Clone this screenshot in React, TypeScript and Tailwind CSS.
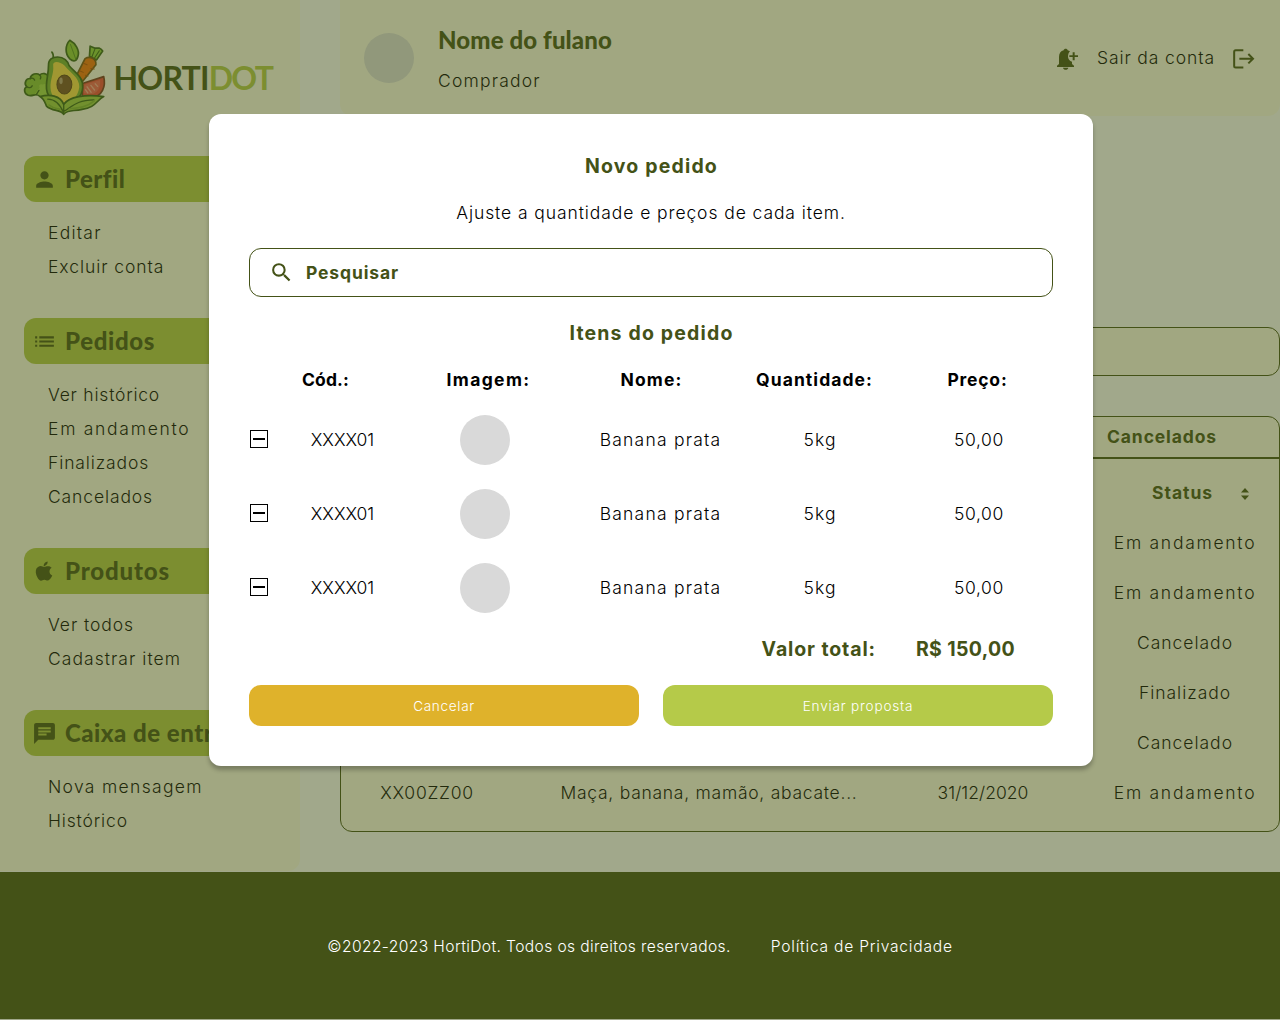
import type { ReactNode } from "react";
import { MdPerson, MdList, MdChat, MdSearch } from "react-icons/md";
import { IoLogoApple } from "react-icons/io5";

type Label = { text: string; cls: string };

function Produce() {
  return (
    <svg width="91.5" height="83.5" viewBox="0 0 270 255" preserveAspectRatio="none" className="shrink-0" strokeLinejoin="round" strokeLinecap="round">
      {/* broccoli */}
      <g stroke="#386219" strokeWidth="5">
        <path fill="#8cc43a" d="M58 184C48 172 38 186 24 181C12 176 10 160 20 155C10 145 18 129 30 130C32 115 50 112 58 119C66 111 80 114 84 124L84 184Z" />
        <path fill="#a4d84a" stroke="none" d="M44 176L58 158C54 150 58 146 66 148L84 144V188H66C62 182 54 176 44 176Z" />
        <path fill="none" strokeWidth="4" d="M30 130C36 127 42 130 43 135M20 155C26 160 34 158 36 152M58 119C62 122 62 128 60 131M48 179L56 166" />
      </g>
      {/* small leaf */}
      <path fill="#92cc3a" stroke="#386219" strokeWidth="5" d="M147 13C163 22 177 43 171 62C167 78 158 80 147 70C132 55 133 28 147 13Z" />
      <path fill="none" stroke="#4f8522" strokeWidth="2.5" d="M149 26C154 42 160 56 165 72" />
      {/* carrot */}
      <path fill="#92d33e" stroke="#386219" strokeWidth="5" d="M205 62L207 31L220 37L234 37L240 41L244 46L226 73Z" />
      <path fill="none" stroke="#386219" strokeWidth="3" d="M212 64L221 40M220 67L234 45" />
      <path fill="#f4720c" stroke="#765315" strokeWidth="5" d="M192 69C206 60 226 69 224 88L185 138L168 118Z" />
      <path fill="none" stroke="#b85208" strokeWidth="3" d="M187 83L198 88M209 99L219 101M177 107L187 111M193 120L201 122" />
      {/* tomato slice */}
      <path fill="#f04a3c" stroke="#7b3623" strokeWidth="5" d="M184 145L247 124C254 153 243 185 210 188L184 187Z" />
      <path fill="#f46457" d="M190 149L236 134C239 157 229 176 207 178L188 175Z" />
      <path fill="none" stroke="#ffab94" strokeWidth="4" d="M198 155L210 172M209 151L220 165M222 146L229 154M193 164L200 174" />
      {/* avocado */}
      <path fill="none" stroke="#386219" strokeWidth="5" d="M94 49C99 55 99 60 98 69" />
      <path fill="#78ae36" stroke="#386219" strokeWidth="5" d="M84 91C83 71 96 64 111 64C129 64 142 76 145 91C163 112 187 125 185 158C183 190 158 207 130 207C98 205 76 185 78 150C79 125 84 116 84 91Z" />
      <path fill="#fcdc4c" d="M98 91C95 76 116 76 132 91C145 109 177 128 175 156C171 190 150 203 129 203C107 201 91 183 90 158C89 132 100 116 98 91Z" />
      <ellipse cx="131" cy="148" rx="22" ry="29" fill="#7a5029" stroke="#5c3c1a" strokeWidth="3" />
      <ellipse cx="121" cy="137" rx="5" ry="10" fill="#bba17c" />
      {/* base leaves */}
      <path fill="#a0cf44" stroke="#386219" strokeWidth="5" d="M59 185C87 177 119 181 129 209C143 185 194 177 247 185C226 196 222 220 183 224C159 231 143 223 129 239C120 224 95 231 78 214C73 201 71 192 59 185Z" />
      <path fill="none" stroke="#386219" strokeWidth="4" d="M129 209V235M82 193C105 193 119 210 129 235M131 229C156 213 170 196 218 195" />
      <path fill="none" stroke="#82b437" strokeWidth="5" d="M86 211C98 221 108 221 118 224M146 222C174 220 198 217 219 198" />
    </svg>
  );
}

function BellPlus() {
  return (
    <svg width="24" height="23" viewBox="0 0 72 69" fill="#445217">
      <path d="M3 57V53L9 48V27C9 16 14 9 23 7C24 1 34 1 35 7C38 8 40 9 42 10C34 18 34 33 43 39L48 41V48L54 53V57Z" />
      <path d="M21 59H37C36 63 33 65 29 65S22 63 21 59Z" />
      <path d="M50 13H56V22H66V27H56V37H50V27H40V22H50Z" />
    </svg>
  );
}

function LeaveIcon() {
  return (
    <svg width="24" height="22" viewBox="0 0 72 66" fill="none" stroke="#445217" strokeWidth="6">
      <path d="M34 6.500H11Q6.500 6.500 6.500 11V54Q6.500 58.500 11 58.500H34" />
      <path d="M22 32H63M49 18L63 32L49 46" />
    </svg>
  );
}

function SortIcon() {
  return (
    <svg width="10" height="14" viewBox="0 0 10 14" fill="#445217">
      <path d="M5 1L9 5.500H1Z" />
      <path d="M5 13L9 8.500H1Z" />
    </svg>
  );
}

function NavGroup({ icon, title, items }: { icon: ReactNode; title: Label; items: Label[] }) {
  return (
    <section>
      <h2 className="flex h-[46px] items-center gap-2 rounded-xl bg-[#b5ca49] pl-2 text-[#445217]">
        <span className="pt-[1.5px]">{icon}</span>
        <span className={`whitespace-nowrap font-['Lato',sans-serif] text-2xl font-black ${title.cls}`}>{title.text}</span>
      </h2>
      <ul className="flex flex-col gap-3 pl-6 pt-5">
        {items.map((i) => (
          <li key={i.text} className={`leading-[22px] ${i.cls}`}>{i.text}</li>
        ))}
      </ul>
    </section>
  );
}

function Sidebar() {
  return (
    <aside className="h-[871px] w-[300px] shrink-0 rounded-br-xl bg-[#fefceb]">
      <div className="flex h-[155.5px] items-start pl-5 pt-9">
        <Produce />
        <div className="whitespace-nowrap pl-0.5 pt-[22px] font-['Lato',sans-serif] text-[32px] font-bold leading-10 text-[#445217]">
          <span className="tracking-[-0.8px]">HORTI</span>
          <span className="tracking-[-1.7px] text-[#b5ca49]">DOT</span>
        </div>
      </div>
      <nav className="flex flex-col gap-10 px-6">
        <NavGroup
          icon={<MdPerson size={25} />}
          title={{ text: "Perfil", cls: "tracking-[0.46px]" }}
          items={[
            { text: "Editar", cls: "tracking-[1.25px]" },
            { text: "Excluir conta", cls: "tracking-[0.93px]" },
          ]}
        />
        <NavGroup
          icon={<MdList size={25} />}
          title={{ text: "Pedidos", cls: "tracking-[0.64px]" }}
          items={[
            { text: "Ver histórico", cls: "tracking-[0.78px]" },
            { text: "Em andamento", cls: "tracking-[1.72px]" },
            { text: "Finalizados", cls: "tracking-[0.88px]" },
            { text: "Cancelados", cls: "tracking-[0.88px]" },
          ]}
        />
        <NavGroup
          icon={<IoLogoApple size={22} className="ml-px mr-0.5" />}
          title={{ text: "Produtos", cls: "tracking-[0.85px]" }}
          items={[
            { text: "Ver todos", cls: "tracking-[0.93px]" },
            { text: "Cadastrar item", cls: "tracking-[1.04px]" },
          ]}
        />
        <NavGroup
          icon={<MdChat size={25} />}
          title={{ text: "Caixa de entrada", cls: "tracking-[0.5px]" }}
          items={[
            { text: "Nova mensagem", cls: "tracking-[1.32px]" },
            { text: "Histórico", cls: "tracking-[0.85px]" },
          ]}
        />
      </nav>
    </aside>
  );
}

function Header() {
  return (
    <header className="flex h-[115.5px] items-start rounded-b-xl bg-[#fefceb] pl-6 pr-6">
      <div className="mt-[33px] size-[50px] rounded-full bg-[#dedede]" />
      <div className="ml-6 pt-6">
        <div className="font-['Lato',sans-serif] text-2xl font-black leading-8 tracking-[0.12px] text-[#445217]">Nome do fulano</div>
        <div className="mt-3.5 leading-[22px] tracking-[1.2px]">Comprador</div>
      </div>
      <div className="ml-auto flex items-center pt-[46.5px]">
        <BellPlus />
        <span className="mb-[3px] ml-[17px] w-[118px] whitespace-nowrap leading-[22px] tracking-[0.88px]">Sair da conta</span>
        <span className="ml-[17px]">
          <LeaveIcon />
        </span>
      </div>
    </header>
  );
}

const statuses: Label[] = [
  { text: "Em andamento", cls: "tracking-[1.72px]" },
  { text: "Em andamento", cls: "tracking-[1.72px]" },
  { text: "Cancelado", cls: "tracking-[0.98px]" },
  { text: "Finalizado", cls: "tracking-[0.96px]" },
  { text: "Cancelado", cls: "tracking-[0.98px]" },
];

function Orders() {
  return (
    <section className="mt-10 flex h-[416px] flex-col rounded-xl border border-[#445217] bg-[#fefceb]">
      <div className="flex h-[42px] items-center justify-end border-b-2 border-[#445217] pr-[62px] font-bold text-[#445217]">
        <span className="tracking-[0.88px]">Cancelados</span>
      </div>
      <div className="flex h-[72px] items-start justify-end pr-[29px] pt-[23px] font-bold text-[#445217]">
        <span className="tracking-[0.96px]">Status</span>
        <span className="ml-[27px] mt-[5px]"><SortIcon /></span>
      </div>
      <div className="flex flex-col gap-[26px]">
        {statuses.map((s, i) => (
          <div key={i} className="ml-auto mr-[10px] flex h-6 w-[168px] items-center justify-center">
            <span className={s.cls}>{s.text}</span>
          </div>
        ))}
        <div className="grid h-6 grid-cols-[212px_312px_236px_168px] items-center text-center">
          <span className="pr-10 tracking-[0.75px]">XX00ZZ00</span>
          <span className="whitespace-nowrap tracking-[0.73px]">Maça, banana, mamão, abacate...</span>
          <span className="tracking-[0.05px]">31/12/2020</span>
          <span className="tracking-[1.72px]">Em andamento</span>
        </div>
      </div>
    </section>
  );
}

const columns: Label[] = [
  { text: "Cód.:", cls: "tracking-[0.12px]" },
  { text: "Imagem:", cls: "tracking-[1.38px]" },
  { text: "Nome:", cls: "tracking-[1.14px]" },
  { text: "Quantidade:", cls: "tracking-[1.07px]" },
  { text: "Preço:", cls: "tracking-[0.78px]" },
];

function OrderDialog() {
  return (
    <div
      role="dialog"
      className="absolute left-[209px] top-[114px] flex h-[652px] w-[884px] flex-col rounded-xl bg-white px-10 shadow-[0_4px_4px_rgba(0,0,0,0.25)]"
    >
      <h1 className="mt-10 pl-px text-center text-[19.5px] font-bold leading-6 tracking-[1.17px] text-[#445217]">Novo pedido</h1>
      <p className="mt-6 text-center leading-[22px] tracking-[0.91px]">Ajuste a quantidade e preços de cada item.</p>
      <div className="mt-6 flex h-[49px] shrink-0 items-center gap-3 rounded-xl border border-[#445217] pl-[19px] font-bold text-[#445217]">
        <MdSearch size={25} />
        <span className="tracking-[0.87px]">Pesquisar</span>
      </div>
      <h2 className="mt-6 pl-px text-center text-[19.5px] font-bold leading-6 tracking-[1.16px] text-[#445217]">Itens do pedido</h2>
      <div className="-mx-1.5 mt-6 grid grid-cols-5 pl-px text-center font-bold leading-[22px]">
        {columns.map((c) => (
          <span key={c.text} className={c.cls}>{c.text}</span>
        ))}
      </div>
      <div className="mt-6 flex flex-col gap-6">
        {[0, 1, 2].map((n) => (
          <div key={n} className="grid h-[50px] grid-cols-[52px_83px_202px_149px_170px_148px] items-center text-center">
            <span className="mb-[2px] ml-px flex size-[18px] items-center justify-center border border-black">
              <span className="h-0.5 w-3 bg-black" />
            </span>
            <span>XXXX01</span>
            <span className="size-[50px] justify-self-center rounded-full bg-[#d9d9d9]" />
            <span className="whitespace-nowrap tracking-[1.22px]">Banana prata</span>
            <span className="tracking-[1.1px]">5kg</span>
            <span className="tracking-[0.6px]">50,00</span>
          </div>
        ))}
      </div>
      <div className="mt-6 flex justify-end gap-10 pr-[38px] text-[19.5px] font-bold leading-6 text-[#445217]">
        <span className="tracking-[0.88px]">Valor total:</span>
        <span className="tracking-[0.35px]">R$ 150,00</span>
      </div>
      <div className="mt-6 grid grid-cols-2 gap-6 text-[13.6px] text-white">
        <button className="h-[41px] rounded-xl bg-[#dfb22b] tracking-[0.67px]">Cancelar</button>
        <button className="h-[41px] rounded-xl bg-[#b5ca49] tracking-[0.8px]">Enviar proposta</button>
      </div>
    </div>
  );
}

export default function App() {
  return (
    <div className="relative h-[1020px] w-[1280px] overflow-hidden bg-white font-['Inter',sans-serif] text-[17.5px] font-[330] leading-[22px] text-black">
      <div className="flex h-[872px] gap-10">
        <Sidebar />
        <main className="flex-1">
          <Header />
          <div className="mt-[211.5px] h-[49px] rounded-xl border border-[#445217] bg-[#fefceb]" />
          <Orders />
        </main>
      </div>
      <div className="absolute inset-0 bg-[#445217]/50" />
      <footer className="relative flex h-[147px] items-center justify-center gap-10 bg-[#445217] pt-0.5 text-[15.6px] text-white">
        <span className="tracking-[0.39px]">©2022-2023 HortiDot. Todos os direitos reservados.</span>
        <span className="tracking-[0.77px]">Política de Privacidade</span>
      </footer>
      <OrderDialog />
    </div>
  );
}
